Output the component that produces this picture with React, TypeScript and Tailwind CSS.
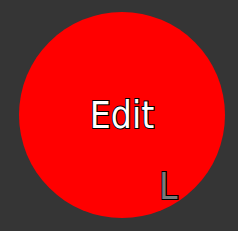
export default function App() {
  return (
    <div className="w-[238px] h-[231px] bg-[#353535] pl-[19px] pt-[12px]">
      <div className="relative w-[206px] h-[206px] rounded-full bg-[#ff0000] flex items-center justify-center">
        <span
          className="text-white text-[37px] leading-none [font-family:'DejaVu_Sans_Condensed','DejaVu_Sans',sans-serif] [paint-order:stroke] [-webkit-text-stroke:2px_#000]"
        >
          Edit
        </span>
        <span className="absolute left-[140px] top-[156px] text-[#7a7a7a] text-[37px] leading-none [font-family:'DejaVu_Sans_Condensed','DejaVu_Sans',sans-serif] [paint-order:stroke] [-webkit-text-stroke:2px_#000]">
          L
        </span>
      </div>
    </div>
  );
}
